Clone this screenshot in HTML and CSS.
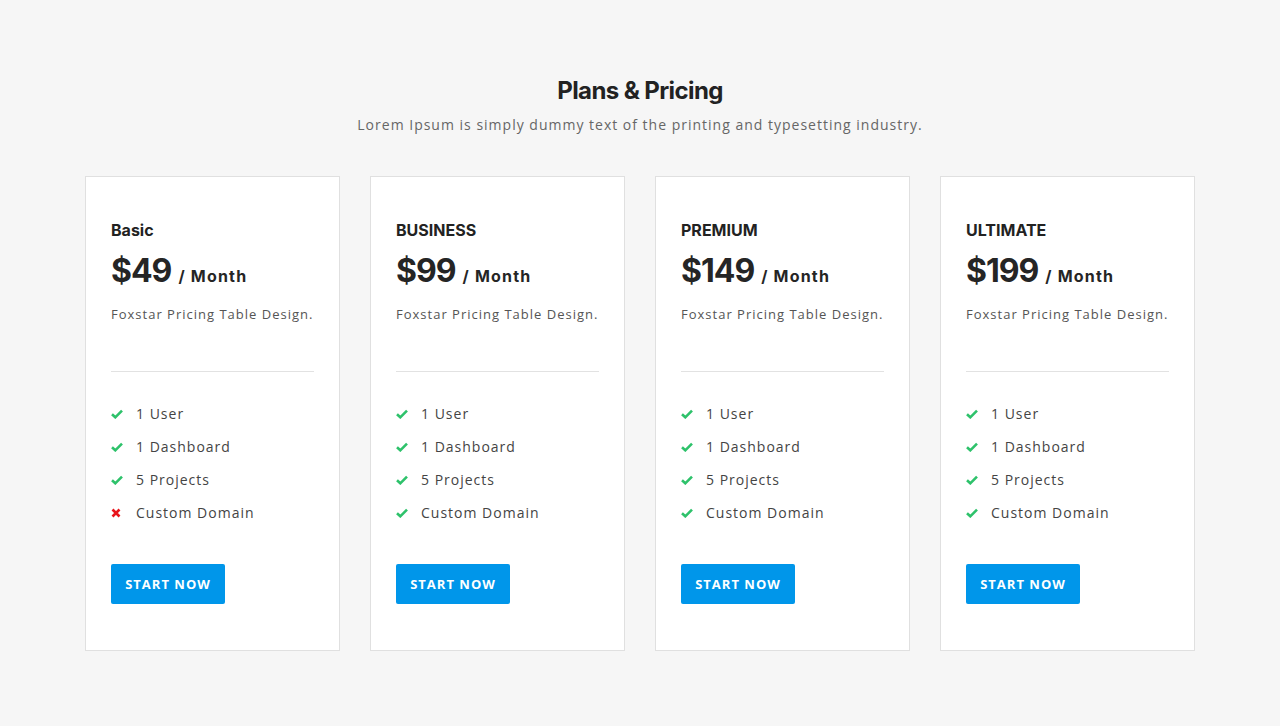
FILE: index.html
```html
<!DOCTYPE html>
<html>
<head>
<meta charset="utf-8">
<link rel="stylesheet" href="styles.css">
</head>
<body>
<section class="pricing">
  <h2 class="title">Plans &amp; Pricing</h2>
  <p class="subtitle">Lorem Ipsum is simply dummy text of the printing and typesetting industry.</p>
  <div class="cards">
    <div class="card">
      <h3 class="plan plan-basic">Basic</h3>
      <div class="price"><span class="amount">$49</span><span class="per">/ Month</span></div>
      <p class="desc">Foxstar Pricing Table Design.</p>
      <hr class="divider">
      <ul class="features">
        <li><span class="ic ok"><svg viewBox="0 0 12 10" width="12" height="10"><path d="M1 5.2 L4.3 8.3 L11 1.6" fill="none" stroke="#2ec26b" stroke-width="2.6"/></svg></span>1 User</li>
        <li><span class="ic ok"><svg viewBox="0 0 12 10" width="12" height="10"><path d="M1 5.2 L4.3 8.3 L11 1.6" fill="none" stroke="#2ec26b" stroke-width="2.6"/></svg></span>1 Dashboard</li>
        <li><span class="ic ok"><svg viewBox="0 0 12 10" width="12" height="10"><path d="M1 5.2 L4.3 8.3 L11 1.6" fill="none" stroke="#2ec26b" stroke-width="2.6"/></svg></span>5 Projects</li>
        <li><span class="ic no"><svg viewBox="0 0 10 10" width="10" height="10"><path d="M1.5 1.5 L8.5 8.5 M8.5 1.5 L1.5 8.5" fill="none" stroke="#e8141b" stroke-width="2.6"/></svg></span>Custom Domain</li>
      </ul>
      <a class="btn" href="#">START NOW</a>
    </div>
    <div class="card">
      <h3 class="plan">BUSINESS</h3>
      <div class="price"><span class="amount">$99</span><span class="per">/ Month</span></div>
      <p class="desc">Foxstar Pricing Table Design.</p>
      <hr class="divider">
      <ul class="features">
        <li><span class="ic ok"><svg viewBox="0 0 12 10" width="12" height="10"><path d="M1 5.2 L4.3 8.3 L11 1.6" fill="none" stroke="#2ec26b" stroke-width="2.6"/></svg></span>1 User</li>
        <li><span class="ic ok"><svg viewBox="0 0 12 10" width="12" height="10"><path d="M1 5.2 L4.3 8.3 L11 1.6" fill="none" stroke="#2ec26b" stroke-width="2.6"/></svg></span>1 Dashboard</li>
        <li><span class="ic ok"><svg viewBox="0 0 12 10" width="12" height="10"><path d="M1 5.2 L4.3 8.3 L11 1.6" fill="none" stroke="#2ec26b" stroke-width="2.6"/></svg></span>5 Projects</li>
        <li><span class="ic ok"><svg viewBox="0 0 12 10" width="12" height="10"><path d="M1 5.2 L4.3 8.3 L11 1.6" fill="none" stroke="#2ec26b" stroke-width="2.6"/></svg></span>Custom Domain</li>
      </ul>
      <a class="btn" href="#">START NOW</a>
    </div>
    <div class="card">
      <h3 class="plan">PREMIUM</h3>
      <div class="price"><span class="amount">$149</span><span class="per">/ Month</span></div>
      <p class="desc">Foxstar Pricing Table Design.</p>
      <hr class="divider">
      <ul class="features">
        <li><span class="ic ok"><svg viewBox="0 0 12 10" width="12" height="10"><path d="M1 5.2 L4.3 8.3 L11 1.6" fill="none" stroke="#2ec26b" stroke-width="2.6"/></svg></span>1 User</li>
        <li><span class="ic ok"><svg viewBox="0 0 12 10" width="12" height="10"><path d="M1 5.2 L4.3 8.3 L11 1.6" fill="none" stroke="#2ec26b" stroke-width="2.6"/></svg></span>1 Dashboard</li>
        <li><span class="ic ok"><svg viewBox="0 0 12 10" width="12" height="10"><path d="M1 5.2 L4.3 8.3 L11 1.6" fill="none" stroke="#2ec26b" stroke-width="2.6"/></svg></span>5 Projects</li>
        <li><span class="ic ok"><svg viewBox="0 0 12 10" width="12" height="10"><path d="M1 5.2 L4.3 8.3 L11 1.6" fill="none" stroke="#2ec26b" stroke-width="2.6"/></svg></span>Custom Domain</li>
      </ul>
      <a class="btn" href="#">START NOW</a>
    </div>
    <div class="card">
      <h3 class="plan">ULTIMATE</h3>
      <div class="price"><span class="amount">$199</span><span class="per">/ Month</span></div>
      <p class="desc">Foxstar Pricing Table Design.</p>
      <hr class="divider">
      <ul class="features">
        <li><span class="ic ok"><svg viewBox="0 0 12 10" width="12" height="10"><path d="M1 5.2 L4.3 8.3 L11 1.6" fill="none" stroke="#2ec26b" stroke-width="2.6"/></svg></span>1 User</li>
        <li><span class="ic ok"><svg viewBox="0 0 12 10" width="12" height="10"><path d="M1 5.2 L4.3 8.3 L11 1.6" fill="none" stroke="#2ec26b" stroke-width="2.6"/></svg></span>1 Dashboard</li>
        <li><span class="ic ok"><svg viewBox="0 0 12 10" width="12" height="10"><path d="M1 5.2 L4.3 8.3 L11 1.6" fill="none" stroke="#2ec26b" stroke-width="2.6"/></svg></span>5 Projects</li>
        <li><span class="ic ok"><svg viewBox="0 0 12 10" width="12" height="10"><path d="M1 5.2 L4.3 8.3 L11 1.6" fill="none" stroke="#2ec26b" stroke-width="2.6"/></svg></span>Custom Domain</li>
      </ul>
      <a class="btn" href="#">START NOW</a>
    </div>
  </div>
</section>
</body>
</html>
```
FILE: styles.css
```css
* { box-sizing: border-box; }
html, body { margin: 0; padding: 0; }
body {
  background: #f6f6f6;
  font-family: "Open Sans", "Liberation Sans", sans-serif;
  color: #333;
  height: 726px;
}
.pricing {
  width: 1110px;
  margin: 0 auto;
  padding-top: 76px;
}
.title {
  margin: 0;
  text-align: center;
  font-family: "Inter", "DejaVu Sans", sans-serif;
  font-weight: 700;
  font-size: 24px;
  line-height: 30px;
  letter-spacing: -0.6px;
  color: #222;
}
.subtitle {
  margin: 7px 0 0;
  text-align: center;
  font-size: 14px;
  line-height: 24px;
  letter-spacing: 1px;
  color: #666;
}
.cards {
  display: grid;
  grid-template-columns: repeat(4, 1fr);
  gap: 30px;
  margin-top: 39px;
}
.card {
  background: #fff;
  border: 1px solid #e0e0e0;
  padding: 42px 25px 45px;
  height: 475px;
}
.plan {
  margin: 0;
  font-family: "Inter", "DejaVu Sans", sans-serif;
  font-weight: 700;
  font-size: 16px;
  line-height: 22px;
  color: #222;
}
.price {
  margin-top: 10px;
  display: flex;
  align-items: baseline;
  font-family: "Inter", "DejaVu Sans", sans-serif;
  font-weight: 700;
  color: #252525;
}
.amount {
  font-size: 32px;
  line-height: 40px;
  letter-spacing: -1px;
}
.per {
  font-size: 16px;
  margin-left: 7px;
  letter-spacing: 1.2px;
}
.desc {
  margin: 13px 0 0;
  font-size: 13px;
  line-height: 20px;
  letter-spacing: 1px;
  color: #555;
}
.divider {
  margin: 47px 0 0;
  border: 0;
  border-top: 1px solid #e2e2e2;
}
.features {
  list-style: none;
  margin: 25px 0 0;
  padding: 0;
}
.features li {
  display: flex;
  align-items: center;
  height: 33px;
  font-size: 14px;
  letter-spacing: 1px;
  color: #444;
}
.ic {
  width: 25px;
  display: flex;
  align-items: center;
}
.btn {
  display: inline-block;
  margin-top: 35px;
  width: 114px;
  height: 40px;
  line-height: 40px;
  text-align: center;
  background: #0096ea;
  color: #fff;
  border-radius: 2px;
  font-size: 13px;
  font-weight: 700;
  letter-spacing: 1px;
  text-decoration: none;
}
```
